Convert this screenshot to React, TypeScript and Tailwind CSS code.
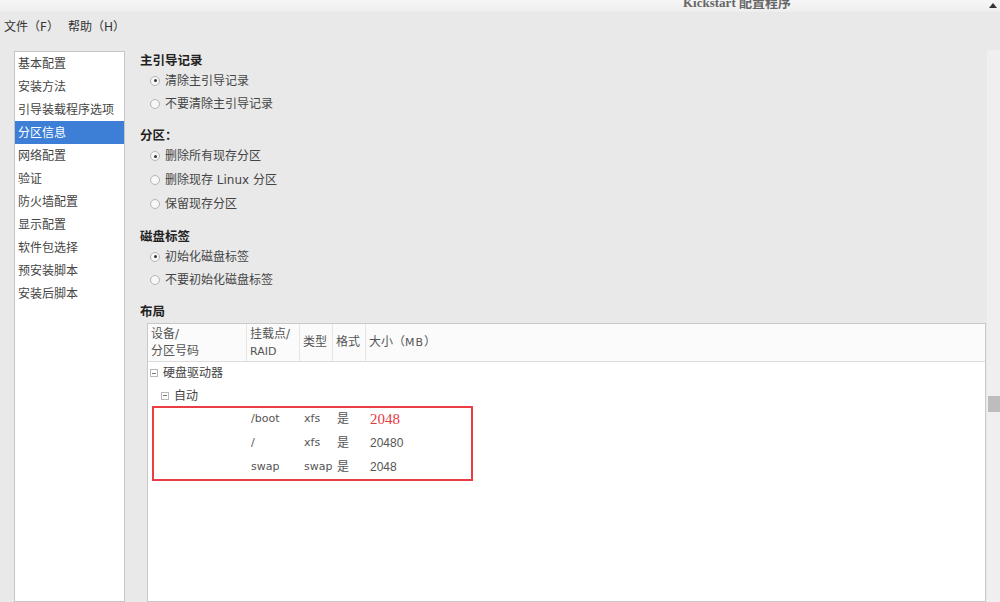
import React from "react";

const FONT = '"DejaVu Sans", "Noto Sans CJK SC", sans-serif';

const navItems = [
  "基本配置",
  "安装方法",
  "引导装载程序选项",
  "分区信息",
  "网络配置",
  "验证",
  "防火墙配置",
  "显示配置",
  "软件包选择",
  "预安装脚本",
  "安装后脚本",
];

function Radio({ label, checked, tall }: { label: string; checked?: boolean; tall?: boolean }) {
  return (
    <div className={`flex items-center pl-[10px] ${tall ? "h-[24px]" : "h-[23px]"}`}>
      <span className="flex h-[10px] w-[10px] items-center justify-center rounded-full border border-[#b4b4b4] bg-[#f7f7f7]">
        {checked && <span className="h-[3px] w-[3px] rounded-full bg-[#333]" />}
      </span>
      <span className="ml-[5px] text-[12px] text-[#444]">{label}</span>
    </div>
  );
}

function Heading({ children, className = "" }: { children: React.ReactNode; className?: string }) {
  return (
    <div className={`flex h-[19px] items-center pt-[3px] text-[12.5px] font-bold text-[#222] ${className}`}>
      {children}
    </div>
  );
}

function Expander() {
  return (
    <span className="flex h-[8px] w-[8px] items-center justify-center border border-[#b8b8b8] bg-white">
      <span className="h-px w-[4px] bg-[#777]" />
    </span>
  );
}

const rows = [
  { mount: "/boot", type: "xfs", fmt: "是", size: "2048", hot: true },
  { mount: "/", type: "xfs", fmt: "是", size: "20480" },
  { mount: "swap", type: "swap", fmt: "是", size: "2048" },
];

export default function App() {
  return (
    <div
      className="flex h-[602px] w-[1000px] flex-col overflow-hidden bg-[#e9e9e9]"
      style={{ fontFamily: FONT }}
    >
      {/* title bar */}
      <div className="flex h-[12px] items-start bg-gradient-to-b from-[#f6f6f6] to-[#eeeeee]">
        <span
          className="ml-[683px] -mt-[7px] text-[13px] font-bold text-[#666]"
          style={{ fontFamily: '"Liberation Serif", "Noto Sans CJK SC", serif' }}
        >
          Kickstart 配置程序
        </span>
        <span className="ml-auto mr-[3px] mt-[3px] h-0 w-0 border-x-[4px] border-b-[5px] border-x-transparent border-b-[#333]" />
      </div>

      {/* menu bar */}
      <div className="flex h-[30px] items-center gap-[9px] pl-[4px] text-[12px] text-[#333]">
        <span>文件（F）</span>
        <span>帮助（H）</span>
      </div>

      <div className="flex min-h-0 flex-1 pt-[8px]">
        {/* sidebar */}
        <div className="ml-[14px] mt-[1px] w-[111px] border border-[#c6c6c6] bg-white">
          {navItems.map((item) => (
            <div
              key={item}
              className={`flex h-[23px] items-center pl-[3px] text-[12px] ${
                item === "分区信息" ? "bg-[#3d7fd6] text-white" : "text-[#444]"
              }`}
            >
              {item}
            </div>
          ))}
        </div>

        {/* content */}
        <div className="ml-[15px] flex min-w-0 flex-1 flex-col">
          <Heading>主引导记录</Heading>
          <Radio label="清除主引导记录" checked />
          <Radio label="不要清除主引导记录" />

          <Heading className="mt-[10px]">分区：</Heading>
          <Radio label="删除所有现存分区" checked tall />
          <Radio label="删除现存 Linux 分区" tall />
          <Radio label="保留现存分区" tall />

          <Heading className="mt-[10px]">磁盘标签</Heading>
          <Radio label="初始化磁盘标签" checked />
          <Radio label="不要初始化磁盘标签" />

          <Heading className="mt-[10px]">布局</Heading>

          {/* partition table */}
          <div className="ml-[7px] mt-[3px] flex min-h-0 flex-1 flex-col border border-[#c9c9c9] bg-white">
            <div className="flex h-[38px] border-b border-[#dcdcdc] bg-[#fbfbfb] text-[12px] leading-[17px] text-[#555]">
              <div className="flex w-[99px] flex-col justify-center border-r border-[#e6e6e6] pl-[3px]">
                <span>设备/</span>
                <span>分区号码</span>
              </div>
              <div className="flex w-[53px] flex-col justify-center border-r border-[#e6e6e6] pl-[3px]">
                <span>挂载点/</span>
                <span className="text-[11px]">RAID</span>
              </div>
              <div className="flex w-[33px] items-center border-r border-[#e6e6e6] pl-[3px]">类型</div>
              <div className="flex w-[33px] items-center border-r border-[#e6e6e6] pl-[3px]">格式</div>
              <div className="flex items-center pl-[3px]">
                大小（<span className="text-[11px] tracking-[1px]">MB</span>）
              </div>
            </div>

            <div className="relative flex-1 text-[12px] text-[#444]">
              <div className="flex h-[22px] items-center pl-[2px]">
                <Expander />
                <span className="ml-[5px]">硬盘驱动器</span>
              </div>
              <div className="flex h-[23px] items-center pl-[13px]">
                <Expander />
                <span className="ml-[5px]">自动</span>
              </div>
              {rows.map((r) => (
                <div key={r.mount} className="flex h-[24px] items-center text-[11px] text-[#555]">
                  <div className="w-[103px]" />
                  <div className="w-[53px]">{r.mount}</div>
                  <div className="w-[33px]">{r.type}</div>
                  <div className="w-[33px] text-[12px]">{r.fmt}</div>
                  {r.hot ? (
                    <div
                      className="text-[15px] text-[#e8383f]"
                      style={{ fontFamily: '"Liberation Serif", serif' }}
                    >
                      {r.size}
                    </div>
                  ) : (
                    <div className="text-[12px]" style={{ fontFamily: '"Liberation Sans", sans-serif' }}>
                      {r.size}
                    </div>
                  )}
                </div>
              ))}
              {/* annotation box */}
              <div className="pointer-events-none absolute left-[4px] top-[44px] h-[75px] w-[321px] border-2 border-[#ec3d47]" />
            </div>
          </div>
        </div>

        {/* window scrollbar */}
        <div className="ml-px flex w-[13px] flex-col bg-[#efefef]">
          <div className="h-[346px]" />
          <div className="ml-px h-[16px] bg-[#bdbdbd]" />
        </div>
      </div>
    </div>
  );
}
